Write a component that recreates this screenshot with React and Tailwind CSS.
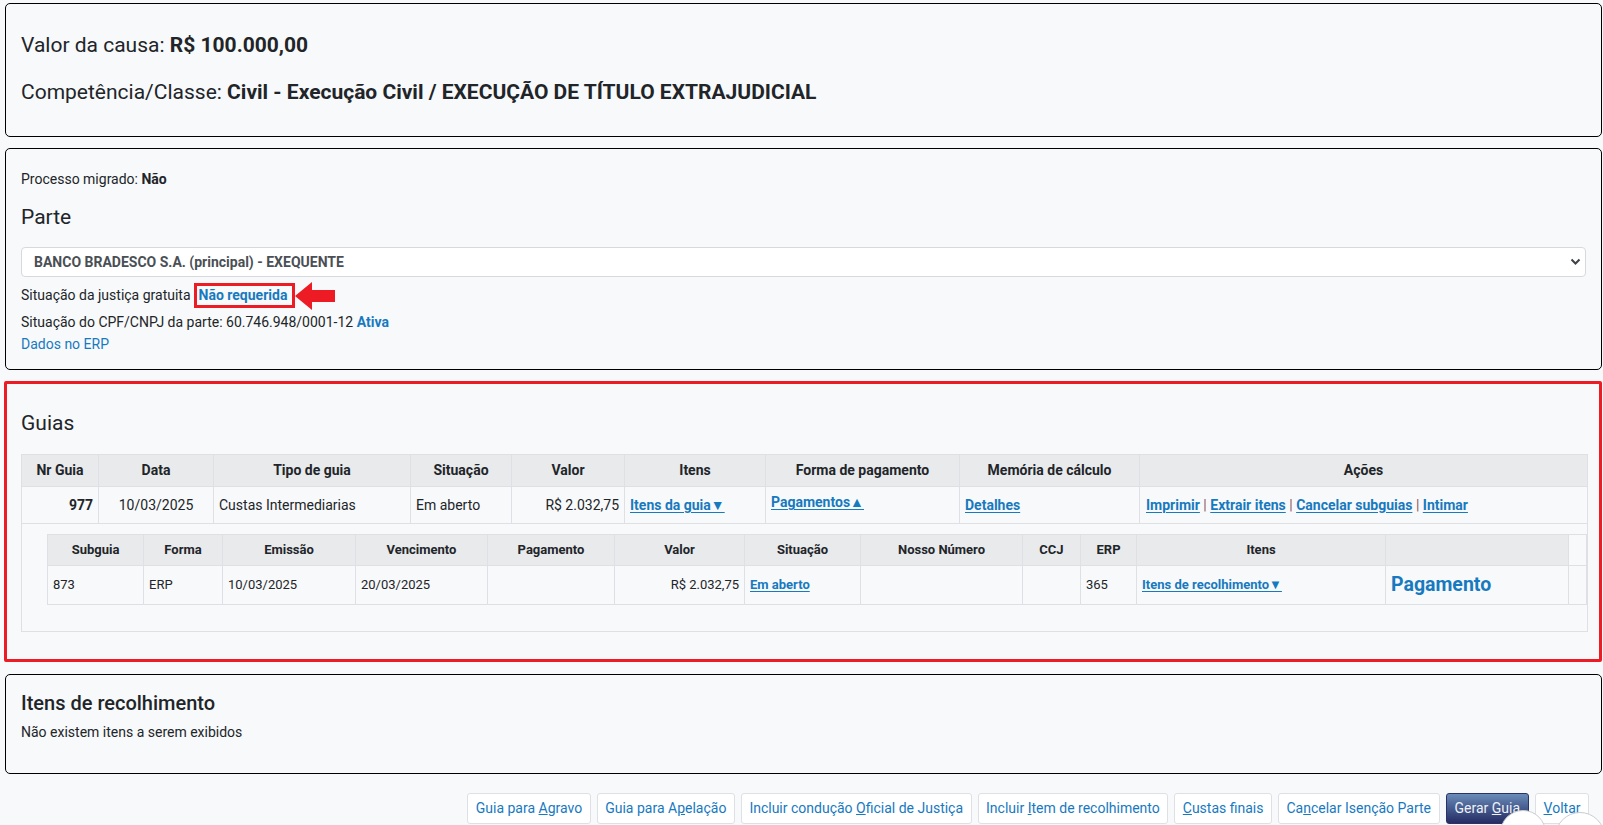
import React from 'react';

const linkCls = "text-[#1779bf] font-bold underline underline-offset-2 decoration-1";

function Card({ className = '', children }) {
  return (
    <div className={`rounded-[5px] border border-black bg-[#f8f9fa] ${className}`}>
      {children}
    </div>
  );
}

function ArrowLeft() {
  return (
    <svg width="40" height="28" viewBox="0 0 40 28" className="inline-block shrink-0">
      <polygon points="0,14 17,0 17,8 40,8 40,20 17,20 17,28" fill="#ed1c24" />
    </svg>
  );
}

function Btn({ children, primary }) {
  if (primary) {
    return (
      <button className="h-[31px] px-[8px] rounded-[3px] border border-[#2a3268] bg-gradient-to-b from-[#6b8cb8] to-[#252c64] text-[14px] text-[#eef2f8]">
        {children}
      </button>
    );
  }
  return (
    <button className="h-[31px] px-[7.5px] rounded-[3px] border border-[#dde1e5] bg-white text-[14px] text-[#1779bf]">
      {children}
    </button>
  );
}

const th = "border border-[#dee0e3] bg-[#e9eaec] font-bold text-center px-[5px] h-[32px]";
const td = "border border-[#dee0e3] px-[5px] h-[37px]";
const sth = "border border-[#dee0e3] bg-[#e9eaec] font-bold text-center px-[5px] h-[31px]";
const std = "border border-[#dee0e3] px-[5px] h-[39px]";

export default function App() {
  return (
    <div className="relative min-h-screen overflow-hidden bg-[#f8f9fa] pt-[3px] pl-[5px] pr-[1px] font-['Roboto','Liberation_Sans',sans-serif] text-[14px] text-[#212529]">
      {/* Valor / Competência */}
      <Card className="px-[15px] pt-[29px] pb-[32px]">
        <div className="text-[21px] leading-[24px]">
          Valor da causa: <b>R$ 100.000,00</b>
        </div>
        <div className="mt-[23px] text-[21px] leading-[24px]">
          Competência/Classe: <b>Civil - Execução Civil / EXECUÇÃO DE TÍTULO EXTRAJUDICIAL</b>
        </div>
      </Card>

      {/* Parte */}
      <Card className="mt-[11px] px-[15px] pt-[20px] pb-[15px]">
        <div className="leading-[20px]">
          Processo migrado: <b>Não</b>
        </div>
        <div className="mt-[16px] text-[21px] leading-[24px]">Parte</div>
        <div className="relative mt-[18px] h-[30px] rounded-[4px] border border-[#d6d9dd] bg-white">
          <div className="pl-[12px] text-[14px] font-bold leading-[28px] text-[#4a4f55]">
            BANCO BRADESCO S.A. (principal) - EXEQUENTE
          </div>
          <svg className="absolute right-[4px] top-[10px]" width="11" height="8" viewBox="0 0 11 8">
            <path d="M1.5 1.5 L5.5 5.5 L9.5 1.5" stroke="#3d4247" strokeWidth="2" fill="none" />
          </svg>
        </div>
        <div className="mt-[6px] flex h-[25px] items-center">
          <span>Situação da justiça gratuita</span>
          <span className="ml-[3px] h-[25px] border-[3px] border-[#ed1c24] pl-[2px] pr-[5px] leading-[19px]">
            <a className="font-bold text-[#1779bf]">Não requerida</a>
          </span>
          <ArrowLeft />
        </div>
        <div className="mt-[4px] leading-[20px]">
          Situação do CPF/CNPJ da parte: 60.746.948/0001-12 <a className="font-bold text-[#1779bf]">Ativa</a>
        </div>
        <div className="mt-[2px] leading-[20px]">
          <a className="text-[#1779bf]">Dados no ERP</a>
        </div>
      </Card>

      {/* Guias */}
      <div className="-ml-px mt-[11px] rounded-[2px] border-[3px] border-[#ed1c24] bg-[#f8f9fa] pl-[14px] pr-[12px] pt-[27px] pb-[27px]">
        <div className="text-[21px] leading-[24px]">Guias</div>
        <table className="mt-[19px] w-[1566px] table-fixed border-collapse">
          <colgroup>
            <col className="w-[77px]" />
            <col className="w-[115px]" />
            <col className="w-[197px]" />
            <col className="w-[101px]" />
            <col className="w-[113px]" />
            <col className="w-[141px]" />
            <col className="w-[194px]" />
            <col className="w-[180px]" />
            <col className="w-[448px]" />
          </colgroup>
          <thead>
            <tr>
              <th className={th}>Nr Guia</th>
              <th className={th}>Data</th>
              <th className={th}>Tipo de guia</th>
              <th className={th}>Situação</th>
              <th className={th}>Valor</th>
              <th className={th}>Itens</th>
              <th className={th}>Forma de pagamento</th>
              <th className={th}>Memória de cálculo</th>
              <th className={th}>Ações</th>
            </tr>
          </thead>
          <tbody>
            <tr>
              <td className={`${td} text-right font-bold`}>977</td>
              <td className={`${td} text-center`}>10/03/2025</td>
              <td className={td}>Custas Intermediarias</td>
              <td className={td}>Em aberto</td>
              <td className={`${td} text-right`}>R$ 2.032,75</td>
              <td className={td}>
                <a className={linkCls}>Itens da guia▼</a>
              </td>
              <td className={`${td} align-top pt-[5px]`}>
                <a className={linkCls}>Pagamentos▲</a>
              </td>
              <td className={td}>
                <a className={linkCls}>Detalhes</a>
              </td>
              <td className={`${td} pl-[6px]`}>
                <a className={linkCls}>Imprimir</a>
                <span className="text-[#8a5a5a]"> | </span>
                <a className={linkCls}>Extrair itens</a>
                <span className="text-[#8a5a5a]"> | </span>
                <a className={linkCls}>Cancelar subguias</a>
                <span className="text-[#8a5a5a]"> | </span>
                <a className={linkCls}>Intimar</a>
              </td>
            </tr>
            <tr>
              <td colSpan={9} className="border border-[#dee0e3] pl-[25px] pr-0 pt-[10px] pb-[26px]">
                <table className="w-[1539px] table-fixed border-collapse text-[13px]">
                  <colgroup>
                    <col className="w-[96px]" />
                    <col className="w-[79px]" />
                    <col className="w-[133px]" />
                    <col className="w-[132px]" />
                    <col className="w-[127px]" />
                    <col className="w-[130px]" />
                    <col className="w-[116px]" />
                    <col className="w-[162px]" />
                    <col className="w-[58px]" />
                    <col className="w-[56px]" />
                    <col className="w-[249px]" />
                    <col className="w-[183px]" />
                    <col className="w-[18px]" />
                  </colgroup>
                  <thead>
                    <tr>
                      <th className={sth}>Subguia</th>
                      <th className={sth}>Forma</th>
                      <th className={sth}>Emissão</th>
                      <th className={sth}>Vencimento</th>
                      <th className={sth}>Pagamento</th>
                      <th className={sth}>Valor</th>
                      <th className={sth}>Situação</th>
                      <th className={sth}>Nosso Número</th>
                      <th className={sth}>CCJ</th>
                      <th className={sth}>ERP</th>
                      <th className={sth}>Itens</th>
                      <th className={sth}></th>
                      <th className="border border-[#dee0e3]"></th>
                    </tr>
                  </thead>
                  <tbody>
                    <tr>
                      <td className={std}>873</td>
                      <td className={std}>ERP</td>
                      <td className={std}>10/03/2025</td>
                      <td className={std}>20/03/2025</td>
                      <td className={std}></td>
                      <td className={`${std} text-right`}>R$ 2.032,75</td>
                      <td className={std}>
                        <a className={linkCls}>Em aberto</a>
                      </td>
                      <td className={std}></td>
                      <td className={std}></td>
                      <td className={std}>365</td>
                      <td className={std}>
                        <a className={linkCls}>Itens de recolhimento▼</a>
                      </td>
                      <td className={std}>
                        <a className="text-[19.5px] font-bold text-[#1779bf]">Pagamento</a>
                      </td>
                      <td className={std}></td>
                    </tr>
                  </tbody>
                </table>
              </td>
            </tr>
          </tbody>
        </table>
      </div>

      {/* Itens de recolhimento */}
      <Card className="mt-[12px] px-[15px] pt-[16px] pb-[31px]">
        <div className="text-[20px] font-medium leading-[24px]">Itens de recolhimento</div>
        <div className="mt-[7px] leading-[20px]">Não existem itens a serem exibidos</div>
      </Card>

      {/* Botões */}
      <div className="mt-[19px] flex justify-end gap-[6px] pr-[13px]">
        <Btn>Guia para <u>A</u>gravo</Btn>
        <Btn>Guia para A<u>p</u>elação</Btn>
        <Btn>Incluir condução <u>O</u>ficial de Justiça</Btn>
        <Btn>Incluir <u>I</u>tem de recolhimento</Btn>
        <Btn><u>C</u>ustas finais</Btn>
        <Btn>Ca<u>n</u>celar Isenção Parte</Btn>
        <Btn primary>Gerar <u>G</u>uia</Btn>
        <Btn><u>V</u>oltar</Btn>
      </div>

      {/* floating widget circles */}
      <div className="absolute left-[1500px] top-[810px] h-[46px] w-[46px] rounded-full border border-[#c9ccd0] bg-white"></div>
      <div className="absolute left-[1555px] top-[812px] h-[50px] w-[50px] rounded-full border border-[#c9ccd0] bg-white"></div>
    </div>
  );
}
